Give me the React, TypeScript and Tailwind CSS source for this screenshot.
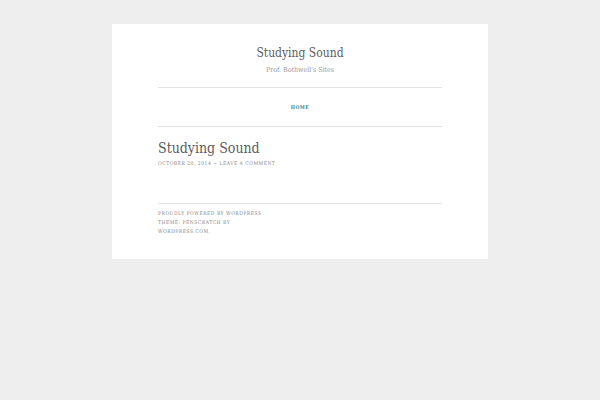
import React from "react";

const meta = "text-[5px] leading-[9px] tracking-[0.5px] uppercase text-[#888888]";

export default function App() {
  return (
    <div className="min-h-screen bg-[#eeeeee] px-4 pt-6 font-['Roboto_Slab','DejaVu_Serif_Condensed','DejaVu_Serif',serif] text-[#5c5c5c]">
      <div className="mx-auto max-w-[376px] bg-white px-[46px] pt-5 pb-[23px]">
        <header className="text-center">
          <h1 className="text-[12px] leading-[18px]">
            <a href="#home">Studying Sound</a>
          </h1>
          <p className="mt-1 text-[7px] leading-[8px] text-[#999999]">Prof. Bothwell's Sites</p>
          <nav className="mt-[13px] border-y border-[#e3e3e3] py-[14px]">
            <a href="#home" className="block text-[5px] leading-[10px] font-bold tracking-[0.5px] text-[#4a8a84]">HOME</a>
          </nav>
        </header>
        <main>
          <article className="pt-3 pb-[35px]">
            <h2 className="text-[14px] leading-[18px]">
              <a href="#post">Studying Sound</a>
            </h2>
            <p className={`mt-[2px] ${meta}`}>
              <a href="#date">October 20, 2014</a> ~ <a href="#comment">Leave a comment</a>
            </p>
          </article>
        </main>
        <footer className="border-t border-[#e3e3e3] pt-[5px]">
          <p className={meta}>
            <a href="#wordpress">Proudly powered by WordPress</a>
            <br />
            Theme: Penscratch by
            <br />
            <a href="#themes">WordPress.com</a>.
          </p>
        </footer>
      </div>
    </div>
  );
}
